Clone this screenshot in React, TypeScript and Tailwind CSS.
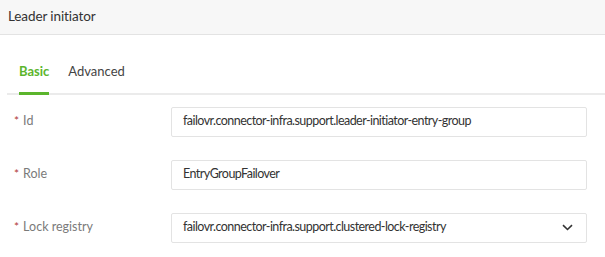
import React from "react";

const font = { fontFamily: 'Lato, "Noto Sans", sans-serif' };

function Row({ label, children }: { label: string; children: React.ReactNode }) {
  return (
    <div className="flex items-center h-[30px]">
      <div className="w-[164px] pl-[7px] flex items-center text-[12.5px] text-[#7a7a7a]">
        <span className="text-[#b03a3a] text-[12px] mr-[4px] -mt-[2px]">*</span>
        <span>{label}</span>
      </div>
      <div className="w-[416px] h-[30px] border border-[#e3e3e3] rounded-[2px] flex items-center pl-[11px] pr-[12px] text-[12.5px] tracking-[-0.55px] text-[#333]">
        {children}
      </div>
    </div>
  );
}

export default function App() {
  return (
    <div className="w-[605px] h-[257px] bg-white overflow-hidden" style={font}>
      <div className="h-[35px] bg-[#f7f7f7] border-b border-[#e3e3e3] flex items-center pl-[8px] pb-[2px] text-[13.5px] tracking-[-0.1px] text-[#333]">
        Leader initiator
      </div>
      <div className="ml-[7px] mt-[27px] border-b-2 border-[#ebebeb] flex text-[13px]">
        <div className="ml-[12px] pb-[10px] border-b-[3px] border-[#5bb52c] -mb-[2px] font-bold text-[#5bb52c]">Basic</div>
        <div className="ml-[19px] pb-[10px] text-[#444]">Advanced</div>
      </div>
      <div className="ml-[7px] mt-[12px] flex flex-col gap-[23px]">
        <Row label="Id">failovr.connector-infra.support.leader-initiator-entry-group</Row>
        <Row label="Role">EntryGroupFailover</Row>
        <Row label="Lock registry">
          <span className="flex-1">failovr.connector-infra.support.clustered-lock-registry</span>
          <svg width="11" height="7" viewBox="0 0 11 7" className="mr-[1px]">
            <path d="M1 1.2 L5.5 5.5 L10 1.2" fill="none" stroke="#333" strokeWidth="1.6" />
          </svg>
        </Row>
      </div>
    </div>
  );
}
